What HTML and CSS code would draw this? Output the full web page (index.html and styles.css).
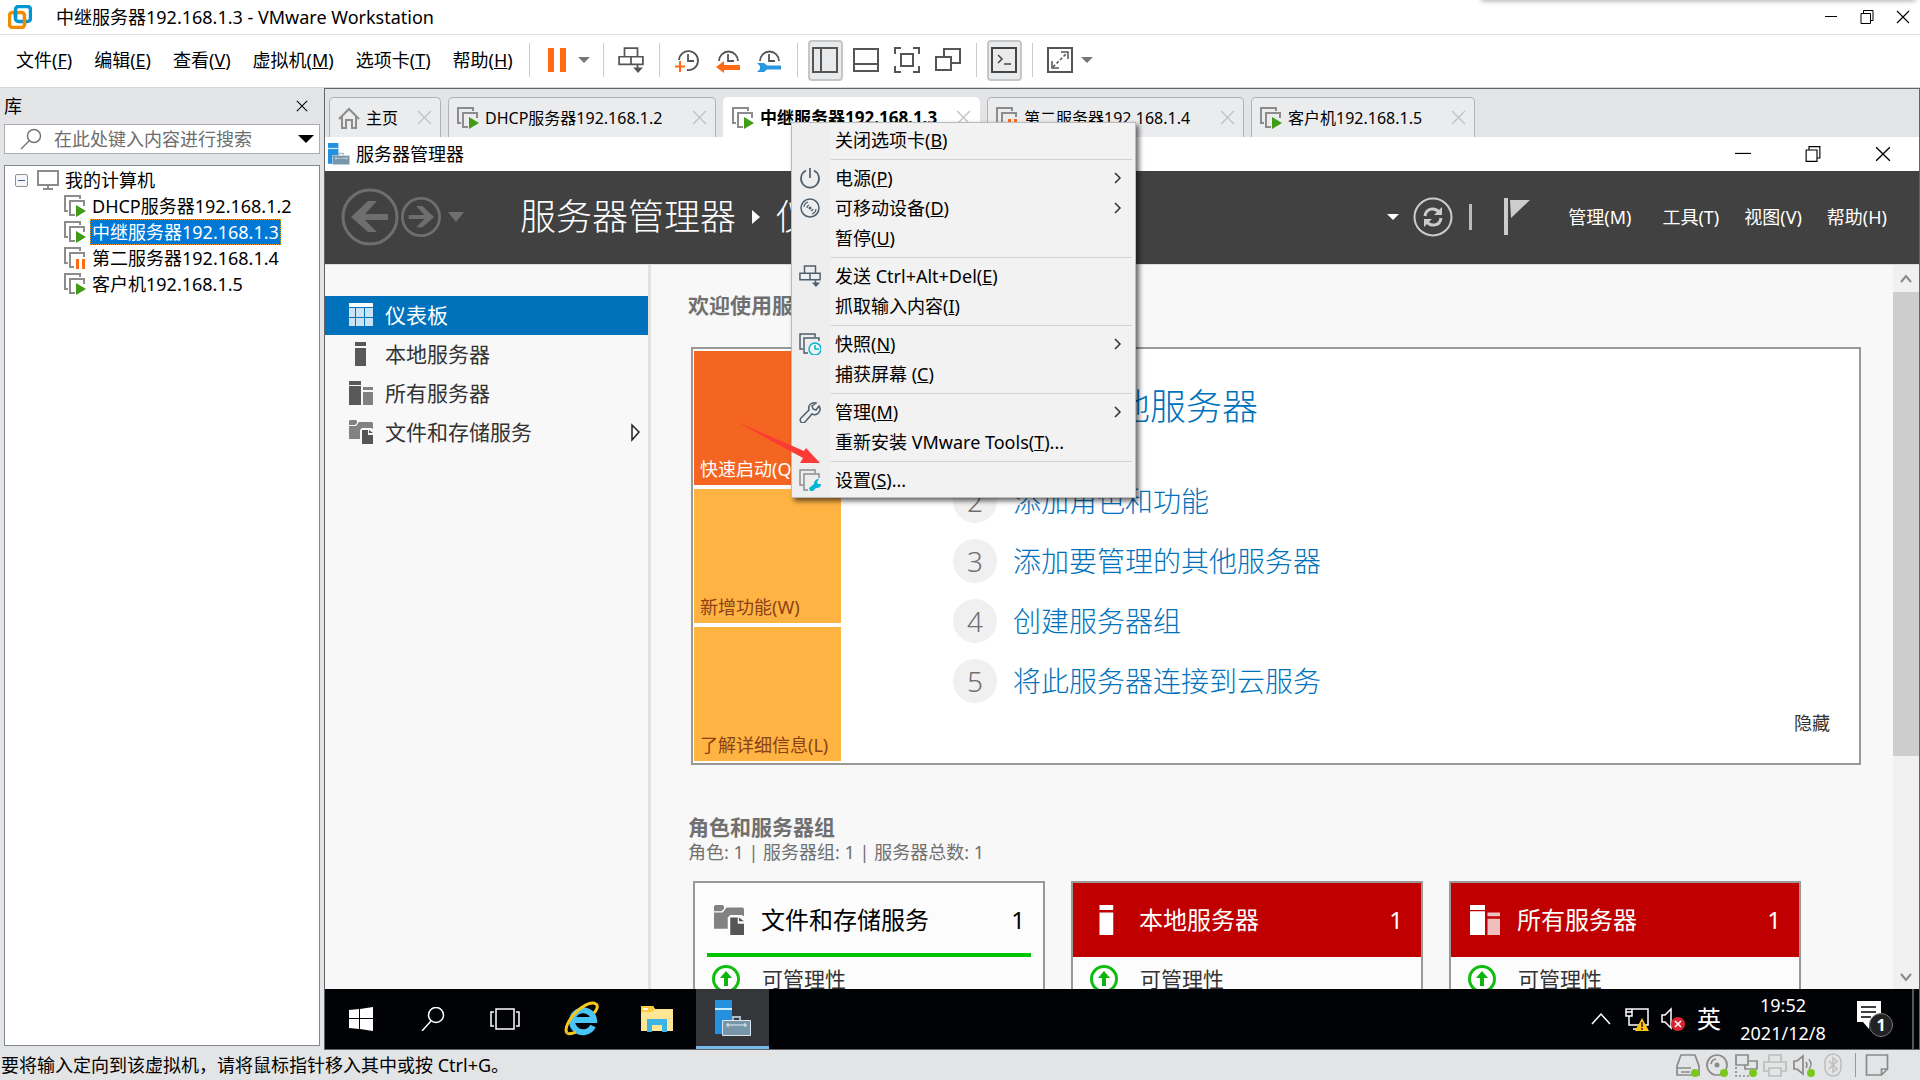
FILE: index.html
```html
<!DOCTYPE html>
<html lang="zh-CN">
<head>
    <meta charset="UTF-8">
    <meta name="viewport" content="width=device-width, initial-scale=1.0">
    <title>中继服务器192.168.1.3 - VMware Workstation</title>
    <link rel="stylesheet" href="styles.css">
</head>
<body>
    <!-- Shared icons -->
    <svg class="defs" aria-hidden="true">
        <symbol id="vm-on" viewBox="0 0 22 22">
            <path d="M1 17V1h15v3M1 16h3M6 20V6h14v5M5 20h6" fill="none" stroke="#8c8c8c" stroke-width="2"/>
            <path d="M12 10l10 6-10 6z" fill="#3f9c14"/>
        </symbol>
        <symbol id="vm-paused" viewBox="0 0 22 22">
            <path d="M1 17V1h15v3M1 16h3M6 20V6h14v4M5 20h5" fill="none" stroke="#8c8c8c" stroke-width="2"/>
            <path d="M12 12h3v10h-3zM18 12h3v10h-3z" fill="#ff6a13"/>
        </symbol>
        <symbol id="cross" viewBox="0 0 14 14">
            <path d="M1 1l12 12M13 1L1 13" fill="none" stroke="currentColor" stroke-width="1.2"/>
        </symbol>
        <symbol id="restore" viewBox="0 0 14 14">
            <path d="M1 3.500h9.500v10H1zM3.500 3.500v-3h9.500v10h-2.500" fill="none" stroke="currentColor"/>
        </symbol>
        <symbol id="send-keys" viewBox="0 0 24 24">
            <path d="M6 1h12v8H6zM1 9h22v7H1zM12 9v7M18 16v5" fill="none" stroke="currentColor" stroke-width="1.6"/>
            <path d="M14 19h9l-4.500 5z" fill="currentColor"/>
        </symbol>
        <symbol id="chevron" viewBox="0 0 8 12">
            <path d="M1 1l5 5-5 5" fill="none" stroke="currentColor" stroke-width="1.500"/>
        </symbol>
        <symbol id="one-server" viewBox="0 0 24 24">
            <path d="M6 0h11v4H6zM6 6h11v18H6z" fill="currentColor"/>
        </symbol>
        <symbol id="all-servers" viewBox="0 0 24 24">
            <path d="M0 0h12v4H0zM0 5h12v19H0z" fill="currentColor"/>
            <path d="M14 6h10v3H14zM14 11h10v13H14z" fill="currentColor" opacity=".75"/>
        </symbol>
        <symbol id="storage" viewBox="0 0 24 24">
            <path d="M0 1l1-1h6l1 1v2l-2 2H0zM0 6h7l3-4h13l1 1v6l-2-1h-9l-2 2v9H0z" fill="#828282"/>
            <path d="M13 10h6v5h5v9H13zM20 10l4 3h-4z" fill="#555"/>
        </symbol>
        <symbol id="server-manager" viewBox="0 0 36 36">
            <path d="M0 0h17v34H0z" fill="#2490df"/>
            <path d="M0 8h17v2H0z" fill="#cfe8fa"/>
            <path d="M18 20v-3h7v3" fill="none" stroke="#a9bdc9" stroke-width="2"/>
            <path d="M7.500 20.500h28v15h-28z" fill="#7896aa" stroke="#dce6ec"/>
            <path d="M11 25h21M13 23v4M30 23v4" stroke="#e6eef2"/>
        </symbol>
        <symbol id="arrow-up" viewBox="0 0 28 28">
            <circle cx="14" cy="14" r="12.500" fill="#fff" stroke="#12bd12" stroke-width="3"/>
            <path d="M14 6l6 7h-4v8h-4v-8H8z" fill="#0cb60c"/>
        </symbol>
    </svg>

    <header class="titlebar">
        <svg class="app-logo" viewBox="0 0 24 24">
            <rect x="7.500" y="1.500" width="15" height="15" rx="3" fill="none" stroke="#0095d3" stroke-width="3.500"/>
            <rect x="1.500" y="7.500" width="15" height="15" rx="3" fill="none" stroke="#f38b00" stroke-width="3.500"/>
            <path d="M7.500 6v6" stroke="#0095d3" stroke-width="3.500"/>
        </svg>
        <h1>中继服务器192.168.1.3 - VMware Workstation</h1>
        <div class="window-buttons">
            <button aria-label="最小化"><svg viewBox="0 0 14 14"><path d="M1 6.500h12" stroke="#000"/></svg></button>
            <button aria-label="还原"><svg><use href="#restore"/></svg></button>
            <button aria-label="关闭"><svg><use href="#cross"/></svg></button>
        </div>
    </header>
    <div class="top-shadow"></div>

    <nav class="menubar">
        <div class="menus">
            <button>文件(<u>F</u>)</button>
            <button>编辑(<u>E</u>)</button>
            <button>查看(<u>V</u>)</button>
            <button>虚拟机(<u>M</u>)</button>
            <button>选项卡(<u>T</u>)</button>
            <button>帮助(<u>H</u>)</button>
        </div>
        <div class="tools">
            <button aria-label="挂起"><svg viewBox="0 0 26 26"><path d="M4 1h6v24H4zM16 1h6v24h-6z" fill="#ff6a13"/></svg></button>
            <button class="drop" aria-label="电源选项"></button>
        </div>
        <div class="tools">
            <button aria-label="发送 Ctrl+Alt+Del"><svg viewBox="0 0 24 24"><use href="#send-keys"/></svg></button>
        </div>
        <div class="tools wide">
            <button aria-label="拍摄快照"><svg viewBox="0 0 26 26"><path d="M5 13a9.500 9.500 0 1 1 8 10M14 7v7h6" fill="none" stroke="#555" stroke-width="1.800"/><path d="M6 14v11M1 19.500h10" stroke="#ff6a13" stroke-width="2"/></svg></button>
            <button aria-label="恢复快照"><svg viewBox="0 0 26 26"><path d="M4 14a9.500 9.500 0 1 1 19 0M13 7v7h6" fill="none" stroke="#555" stroke-width="1.800"/><path d="M1 20l8-6v4h16v5H9v3z" fill="#ff6a13"/></svg></button>
            <button aria-label="管理快照"><svg viewBox="0 0 26 26"><path d="M4 14a9.500 9.500 0 1 1 19 0M13 7v7h6" fill="none" stroke="#555" stroke-width="1.800"/><path d="M1 16h7l3 2.500h14v4H11L8 25H1l3-3v-3z" fill="#2896e0"/></svg></button>
        </div>
        <div class="tools wide">
            <button class="on" aria-label="显示库"><svg viewBox="0 0 26 26"><path d="M1 1h24v24H1zM9 1v24" fill="none" stroke="#555" stroke-width="2"/></svg></button>
            <button aria-label="缩略图栏"><svg viewBox="0 0 26 26"><path d="M1 2h24v22H1zM1 17h24" fill="none" stroke="#555" stroke-width="2"/></svg></button>
            <button aria-label="全屏"><svg viewBox="0 0 26 26"><path d="M1 7V1h6M19 1h6v6M25 19v6h-6M7 25H1v-6M7 7h12v12H7z" fill="none" stroke="#555" stroke-width="2"/></svg></button>
            <button aria-label="Unity"><svg viewBox="0 0 26 26"><path d="M1 10h15v13H1zM9 10V2h16v14h-8" fill="none" stroke="#555" stroke-width="2"/></svg></button>
        </div>
        <div class="tools">
            <button class="on" aria-label="控制台"><svg viewBox="0 0 26 26"><path d="M1 1h24v24H1z" fill="none" stroke="#444" stroke-width="2"/><path d="M7 8l4 4-4 4M13 17h7" fill="none" stroke="#444" stroke-width="1.500"/></svg></button>
        </div>
        <div class="tools">
            <button aria-label="拉伸"><svg viewBox="0 0 26 26"><path d="M1 1h24v24H1z" fill="none" stroke="#555" stroke-width="2"/><path d="M5 14v7h7M14 5h7v7" fill="none" stroke="#555" stroke-width="1.500"/><path d="M6 20L20 6" stroke="#555" stroke-width="1.500" stroke-dasharray="3 2"/></svg></button>
            <button class="drop" aria-label="拉伸选项"></button>
        </div>
    </nav>

    <main class="workspace">
        <!-- Library -->
        <aside class="library">
            <div class="library-head">
                <h2>库</h2>
                <button aria-label="关闭库"><svg><use href="#cross"/></svg></button>
            </div>
            <label class="search">
                <svg viewBox="0 0 22 22"><circle cx="14" cy="8" r="6.500" fill="none" stroke="#777" stroke-width="1.500"/><path d="M9 13l-8 8" stroke="#777" stroke-width="1.500"/></svg>
                <input type="text" aria-label="搜索" placeholder="在此处键入内容进行搜索">
                <span class="search-caret"></span>
            </label>
            <div class="tree">
                <div class="tree-root">
                    <button class="expander" aria-label="折叠"></button>
                    <svg viewBox="0 0 22 22"><path d="M1 2h20v14H1zM11 16v4M6 20h10" fill="none" stroke="#8c8c8c" stroke-width="2"/></svg>
                    <span>我的计算机</span>
                </div>
                <ul>
                    <li><svg><use href="#vm-on"/></svg><a href="#">DHCP服务器192.168.1.2</a></li>
                    <li><svg><use href="#vm-on"/></svg><a href="#" class="selected">中继服务器192.168.1.3</a></li>
                    <li><svg><use href="#vm-paused"/></svg><a href="#">第二服务器192.168.1.4</a></li>
                    <li><svg><use href="#vm-on"/></svg><a href="#">客户机192.168.1.5</a></li>
                </ul>
            </div>
        </aside>

        <section class="console">
            <div class="tabs">
                <div class="tab home">
                    <svg viewBox="0 0 22 22"><path d="M1 12L11 2l10 10M4 10v11h4v-8h6v8h4V10" fill="none" stroke="#8c8c8c" stroke-width="2"/></svg>
                    <a href="#">主页</a>
                    <button aria-label="关闭"><svg><use href="#cross"/></svg></button>
                </div>
                <div class="tab longest">
                    <svg><use href="#vm-on"/></svg>
                    <a href="#">DHCP服务器192.168.1.2</a>
                    <button aria-label="关闭"><svg><use href="#cross"/></svg></button>
                </div>
                <div class="tab long active">
                    <svg><use href="#vm-on"/></svg>
                    <a href="#">中继服务器192.168.1.3</a>
                    <button aria-label="关闭"><svg><use href="#cross"/></svg></button>

                    <!-- Context menu of the tab -->
                    <div class="context-menu" role="menu">
                        <button role="menuitem"><i></i><span>关闭选项卡(<u>B</u>)</span></button>
                        <hr>
                        <button role="menuitem">
                            <i><svg viewBox="0 0 22 22"><path d="M7 3.500a9 9 0 1 0 8 0M11 1v10" fill="none" stroke="#4d5f6e" stroke-width="1.700"/></svg></i>
                            <span>电源(<u>P</u>)</span><svg class="more"><use href="#chevron"/></svg>
                        </button>
                        <button role="menuitem">
                            <i><svg viewBox="0 0 22 22"><circle cx="11" cy="11" r="9" fill="none" stroke="#4d5f6e" stroke-width="1.500"/><circle cx="11" cy="11" r="1.500" fill="#4d5f6e"/><path d="M5 10a6 6 0 0 1 4-5M8 11a3 3 0 0 1 2-3M17 12a6 6 0 0 1-4 5M14 12a3 3 0 0 1-2 2" fill="none" stroke="#4d5f6e" stroke-width="1.200"/></svg></i>
                            <span>可移动设备(<u>D</u>)</span><svg class="more"><use href="#chevron"/></svg>
                        </button>
                        <button role="menuitem"><i></i><span>暂停(<u>U</u>)</span></button>
                        <hr>
                        <button role="menuitem"><i><svg><use href="#send-keys"/></svg></i><span>发送 Ctrl+Alt+Del(<u>E</u>)</span></button>
                        <button role="menuitem"><i></i><span>抓取输入内容(<u>I</u>)</span></button>
                        <hr>
                        <button role="menuitem">
                            <i><svg viewBox="0 0 22 22"><path d="M4 16H1V1h15v3M9 20H5V5h15v3" fill="none" stroke="#4d5f6e" stroke-width="1.500"/><circle cx="16" cy="16" r="6" fill="#f2f2f2" stroke="#06b5d4" stroke-width="1.500"/><path d="M16 12v4h4" fill="none" stroke="#06b5d4" stroke-width="1.500"/></svg></i>
                            <span>快照(<u>N</u>)</span><svg class="more"><use href="#chevron"/></svg>
                        </button>
                        <button role="menuitem"><i></i><span>捕获屏幕 (<u>C</u>)</span></button>
                        <hr>
                        <button role="menuitem">
                            <i><svg viewBox="0 0 22 22"><path d="M17 2a5.500 5.500 0 0 0-7 7L2 17a2.500 2.500 0 0 0 4 4l7-8a5.500 5.500 0 0 0 7-8l-3 4-3-1-1-3z" fill="none" stroke="#4d5f6e" stroke-width="1.500"/></svg></i>
                            <span>管理(<u>M</u>)</span><svg class="more"><use href="#chevron"/></svg>
                        </button>
                        <button role="menuitem"><i></i><span>重新安装 VMware Tools(<u>T</u>)...</span></button>
                        <hr>
                        <button role="menuitem">
                            <i><svg viewBox="0 0 22 22"><path d="M4 16H1V1h15v3M9 21H5V5h15v4" fill="none" stroke="#8c8c8c" stroke-width="1.500"/><path d="M11 22l-1-3 5-4c0-3 2-5 5-5l-2 3 1 2h3c0 3-2 4-5 4l-3 3z" fill="#06b5d4"/></svg></i>
                            <span>设置(<u>S</u>)...</span>
                        </button>
                        <svg class="pointer" viewBox="0 0 84 44"><path d="M0 1l67 29 2-3 14 15H63l3-5z" fill="#fc3b36"/></svg>
                    </div>
                </div>
                <div class="tab long">
                    <svg><use href="#vm-paused"/></svg>
                    <a href="#">第二服务器192.168.1.4</a>
                    <button aria-label="关闭"><svg><use href="#cross"/></svg></button>
                </div>
                <div class="tab short">
                    <svg><use href="#vm-on"/></svg>
                    <a href="#">客户机192.168.1.5</a>
                    <button aria-label="关闭"><svg><use href="#cross"/></svg></button>
                </div>
            </div>

            <!-- Guest desktop -->
            <div class="guest">
                <div class="guest-title">
                    <svg class="guest-logo"><use href="#server-manager"/></svg>
                    <span>服务器管理器</span>
                    <div class="window-buttons big">
                        <button aria-label="最小化"><svg viewBox="0 0 14 14"><path d="M0 6.500h14" stroke="#000"/></svg></button>
                        <button aria-label="还原"><svg><use href="#restore"/></svg></button>
                        <button aria-label="关闭"><svg><use href="#cross"/></svg></button>
                    </div>
                </div>

                <div class="banner">
                    <button class="back" aria-label="后退"><svg viewBox="0 0 58 58"><circle cx="29" cy="29" r="27" fill="none" stroke="#6e6e6e" stroke-width="3"/><path d="M10 29l17-16h9L24 26h23v6H24l12 12h-9z" fill="#6e6e6e"/></svg></button>
                    <button class="forward" aria-label="前进"><svg viewBox="0 0 58 58"><circle cx="29" cy="29" r="27" fill="none" stroke="#6e6e6e" stroke-width="4"/><path d="M48 29L31 13h-9l12 13H11v6h23L22 44h9z" fill="#6e6e6e"/></svg></button>
                    <span class="history-caret"></span>
                    <h2>服务器管理器<span class="crumb"></span>仪表板</h2>
                    <div class="banner-tools">
                        <span class="banner-caret"></span>
                        <button class="refresh" aria-label="刷新"><svg viewBox="0 0 40 40"><circle cx="20" cy="20" r="18.500" fill="none" stroke="#ccc" stroke-width="2"/><path d="M12 19c1-8 10-9 14-4M28 21c-1 8-10 9-14 4" fill="none" stroke="#ccc" stroke-width="3"/><path d="M29 10v8h-8zM11 30v-8h8z" fill="#ccc"/></svg></button>
                        <span class="bar"></span>
                        <button class="flag" aria-label="通知"><svg viewBox="0 0 26 38"><path d="M0 0h4v37H0zM6 2h20L7 20z" fill="#ccc"/></svg></button>
                        <button class="manage">管理(M)</button>
                        <button>工具(T)</button>
                        <button>视图(V)</button>
                        <button>帮助(H)</button>
                    </div>
                </div>

                <div class="manager">
                    <nav class="side-nav">
                        <a href="#" class="current"><svg viewBox="0 0 24 24"><path d="M0 0h24v4H0z" fill="#fff"/><path d="M0 5h6v9H0zM7 5h8v9H7zM16 5h8v9h-8zM0 15h6v8H0zM7 15h8v8H7zM16 15h8v8h-8z" fill="#cbe3f5"/></svg>仪表板</a>
                        <a href="#"><svg><use href="#one-server"/></svg>本地服务器</a>
                        <a href="#"><svg><use href="#all-servers"/></svg>所有服务器</a>
                        <a href="#"><svg><use href="#storage"/></svg>文件和存储服务<svg class="expand" viewBox="0 0 10 20"><path d="M1 3l7 7-7 8z" fill="#fff" stroke="#222" stroke-width="1.500"/></svg></a>
                    </nav>

                    <div class="dashboard">
                        <h3>欢迎使用服务器管理器</h3>
                        <div class="welcome">
                            <div class="tiles">
                                <button class="tile quick">快速启动(Q)</button>
                                <button class="tile">新增功能(W)</button>
                                <button class="tile">了解详细信息(L)</button>
                            </div>
                            <ol class="steps">
                                <li class="first"><b>1</b><a href="#">配置此本地服务器</a></li>
                                <li><b>2</b><a href="#">添加角色和功能</a></li>
                                <li><b>3</b><a href="#">添加要管理的其他服务器</a></li>
                                <li><b>4</b><a href="#">创建服务器组</a></li>
                                <li><b>5</b><a href="#">将此服务器连接到云服务</a></li>
                            </ol>
                            <button class="hide">隐藏</button>
                        </div>

                        <h3>角色和服务器组</h3>
                        <p class="totals">角色: 1 | 服务器组: 1 | 服务器总数: 1</p>
                        <div class="cards">
                            <article class="card">
                                <header><svg><use href="#storage"/></svg><h4>文件和存储服务</h4><span>1</span></header>
                                <p><svg><use href="#arrow-up"/></svg>可管理性</p>
                            </article>
                            <article class="card alert">
                                <header><svg><use href="#one-server"/></svg><h4>本地服务器</h4><span>1</span></header>
                                <p><svg><use href="#arrow-up"/></svg>可管理性</p>
                            </article>
                            <article class="card alert">
                                <header><svg><use href="#all-servers"/></svg><h4>所有服务器</h4><span>1</span></header>
                                <p><svg><use href="#arrow-up"/></svg>可管理性</p>
                            </article>
                        </div>
                    </div>

                    <div class="scrollbar">
                        <svg viewBox="0 0 12 12"><path d="M1 9l5-6 5 6" fill="none" stroke="#888" stroke-width="2"/></svg>
                        <div class="track"><div class="thumb"></div></div>
                        <svg viewBox="0 0 12 12"><path d="M1 3l5 6 5-6" fill="none" stroke="#888" stroke-width="2"/></svg>
                    </div>
                </div>

                <div class="taskbar">
                    <button aria-label="开始"><svg viewBox="0 0 24 24"><path d="M0 3l10-1v9H0zM11 2l13-2v11H11zM0 12h10v10L0 21zM11 12h13v12l-13-2z" fill="#fff"/></svg></button>
                    <button aria-label="搜索"><svg viewBox="0 0 24 24"><circle cx="15" cy="8" r="7.500" fill="none" stroke="#fff" stroke-width="1.500"/><path d="M10 14L1 24" stroke="#fff" stroke-width="1.500"/></svg></button>
                    <button aria-label="任务视图"><svg class="task-view" viewBox="0 0 30 24"><path d="M6 2h18v20H6zM4 5H1v14h3M26 5h3v14h-3" fill="none" stroke="#fff" stroke-width="1.500"/></svg></button>
                    <button class="app" aria-label="Internet Explorer"><svg viewBox="0 0 36 36"><path d="M30 25a11 11 0 1 1 1-6H12" fill="none" stroke="#48c4f5" stroke-width="6"/><path d="M4 32C-2 24 22-3 33 3c3 2 0 7-2 9" fill="none" stroke="#f7c71c" stroke-width="3"/><path d="M4 32c2 2 6 0 9-1" fill="none" stroke="#f7c71c" stroke-width="3"/></svg></button>
                    <button class="app" aria-label="文件资源管理器"><svg viewBox="0 0 36 36"><path d="M2 5h12l2 3h18v22H2z" fill="#ffe694"/><path d="M2 5h12l2 3-3 3H2z" fill="#ffcb3d"/><path d="M4 7h5v2H4z" fill="#fff"/><path d="M8 18h20v13h-5v-7H13v7H8z" fill="#3db4e7"/></svg></button>
                    <button class="app running" aria-label="服务器管理器"><svg><use href="#server-manager"/></svg></button>
                    <div class="tray">
                        <button aria-label="显示隐藏的图标"><svg viewBox="0 0 24 24"><path d="M3 17l9-10 9 10" fill="none" stroke="#fff" stroke-width="1.500"/></svg></button>
                        <button aria-label="网络"><svg viewBox="0 0 24 24"><path d="M6 2h17v16H4V9M1 2h6v7H1zM1 5h6M8 22h6" fill="none" stroke="#fff" stroke-width="1.500"/><path d="M17 11l7 13H10z" fill="#ffc20e"/><path d="M17 15v5M17 21v2" stroke="#222" stroke-width="1.500"/></svg></button>
                        <button aria-label="音量"><svg viewBox="0 0 24 24"><path d="M1 8h3l6-6v19l-6-6H1z" fill="none" stroke="#fff" stroke-width="1.500"/><circle cx="17" cy="17" r="7" fill="#dc2430"/><path d="M14 14l6 6M20 14l-6 6" stroke="#fff" stroke-width="1.500"/></svg></button>
                        <button class="ime">英</button>
                        <time><span>19:52</span><span>2021/12/8</span></time>
                        <button class="notify" aria-label="通知"><svg viewBox="0 0 24 28"><path d="M0 0h24v21H14l-2 2v5l-6-7H0z" fill="#fff"/><path d="M4 6h15M4 11h15M4 16h10" stroke="#000" stroke-width="1.500"/></svg><em>1</em></button>
                    </div>
                </div>
            </div>
        </section>
    </main>

    <footer class="statusbar">
        <span>要将输入定向到该虚拟机，请将鼠标指针移入其中或按 Ctrl+G。</span>
        <div class="devices">
            <svg viewBox="0 0 24 24"><path d="M5 2h14l4 11v9H1v-9zM1 15h14M5 19h9" fill="none" stroke="#8a8a8a" stroke-width="1.700"/><circle cx="19" cy="20" r="4" fill="#7ac81e"/></svg>
            <svg viewBox="0 0 24 24"><circle cx="12" cy="12" r="10" fill="none" stroke="#8a8a8a" stroke-width="1.700"/><circle cx="12" cy="12" r="2.500" fill="#8a8a8a"/><path d="M6 11a6 6 0 0 1 5-5" fill="none" stroke="#8a8a8a" stroke-width="1.700"/><circle cx="19" cy="20" r="4" fill="#7ac81e"/></svg>
            <svg viewBox="0 0 24 24"><path d="M2 2h12v10H2zM11 12v4h12V8h-8" fill="none" stroke="#8a8a8a" stroke-width="1.700"/><path d="M2 14v9h15" fill="none" stroke="#8a8a8a" stroke-width="1.700" stroke-dasharray="2 2"/><circle cx="19" cy="20" r="4" fill="#7ac81e"/></svg>
            <svg viewBox="0 0 24 24"><path d="M6 9V2h12v7M5 18H1V9h22v9h-4M6 15h12v8H6z" fill="none" stroke="#bdbdbd" stroke-width="1.700"/></svg>
            <svg viewBox="0 0 24 24"><path d="M2 8h3l6-5v18l-6-5H2z" fill="none" stroke="#8a8a8a" stroke-width="1.700"/><path d="M14 9q2 3 0 6M17 6q4 6 0 10" fill="none" stroke="#8a8a8a" stroke-width="1.500"/><circle cx="19" cy="20" r="4" fill="#7ac81e"/></svg>
            <svg viewBox="0 0 24 24"><rect x="4" y="1" width="16" height="22" rx="8" fill="none" stroke="#bdbdbd" stroke-width="1.500"/><path d="M8 8l8 8-4 3V5l4 3-8 8" fill="none" stroke="#bdbdbd" stroke-width="1.500"/></svg>
            <svg class="note" viewBox="0 0 24 24"><path d="M2 2h21v14l-6 6H2zM23 16h-6v6" fill="none" stroke="#8a8a8a" stroke-width="1.700"/></svg>
        </div>
    </footer>
</body>
</html>
```
FILE: styles.css
```css
* {
    box-sizing: border-box;
}
body {
    margin: 0;
    height: 100vh;
    display: flex;
    flex-direction: column;
    overflow: hidden;
    background: #e3e4e6;
    color: #000;
    font-family: "Noto Sans", "Noto Sans CJK SC", sans-serif;
    font-size: 18px;
    line-height: 26px;
}
h1, h2, h3, h4, p, ul, ol {
    margin: 0;
    padding: 0;
    font-size: inherit;
    font-weight: normal;
    list-style: none;
}
button {
    margin: 0;
    padding: 0;
    border: 0;
    background: none;
    color: inherit;
    font: inherit;
    text-align: left;
    white-space: nowrap;
}
a {
    color: inherit;
    text-decoration: none;
    white-space: nowrap;
}
svg {
    display: block;
    flex: none;
    width: 22px;
    height: 22px;
}
.defs {
    position: absolute;
    width: 0;
    height: 0;
}

/* Title bar */
.titlebar {
    display: flex;
    align-items: center;
    height: 35px;
    padding: 0 10px 0 8px;
    background: #fff;
    border-bottom: 1px solid #e0e0e0;
}
.app-logo {
    width: 24px;
    height: 24px;
    margin-right: 24px;
}
.window-buttons {
    display: flex;
    gap: 22px;
    margin-left: auto;
}
.window-buttons svg {
    width: 14px;
    height: 14px;
}
.top-shadow {
    position: absolute;
    top: -10px;
    right: 6px;
    width: 432px;
    height: 10px;
    box-shadow: 0 0 5px 1px #aaa;
}

/* Menu bar and toolbar */
.menubar {
    display: flex;
    align-items: center;
    height: 53px;
    padding-bottom: 2px;
    background: #fff;
    border-bottom: 1px solid #d8d8d8;
}
.menus {
    display: flex;
    gap: 22px;
    padding: 0 16px;
}
.tools {
    display: flex;
    align-items: center;
    height: 34px;
    padding: 0 10px;
    border-left: 1px solid #ccc;
}
.tools.wide {
    gap: 6px;
}
.tools button {
    display: flex;
    align-items: center;
    justify-content: center;
    width: 35px;
    height: 41px;
    border-radius: 4px;
}
.tools svg {
    width: 26px;
    height: 26px;
    color: #555;
}
.tools .on {
    background: #e9eaec;
    border: 2px solid #c4c6c8;
}
.tools .drop {
    width: 18px;
}
.drop::after {
    content: "";
    border: 6px solid transparent;
    border-top-color: #777;
    border-bottom-width: 0;
}

.workspace {
    flex: 1;
    display: flex;
    min-height: 0;
}

/* Library */
.library {
    width: 324px;
    display: flex;
    flex-direction: column;
    padding: 0 4px 4px;
}
.library-head {
    display: flex;
    align-items: center;
    justify-content: space-between;
    height: 36px;
    padding-right: 12px;
}
.library-head svg {
    width: 12px;
    height: 12px;
}
.search {
    display: flex;
    align-items: center;
    height: 30px;
    padding: 0 5px 0 15px;
    background: #fff;
    border: 1px solid #abadb3;
}
.search input {
    flex: 1;
    min-width: 0;
    margin: 0 0 0 12px;
    padding: 0;
    border: 0;
    outline: 0;
    font: inherit;
}
.search input::placeholder {
    color: #6d6d6d;
}
.search-caret {
    border: 8px solid transparent;
    border-top-color: #000;
    border-bottom-width: 0;
}
.tree {
    flex: 1;
    margin-top: 11px;
    padding: 1px 0 0 10px;
    background: #fff;
    border: 1px solid #828790;
}
.tree-root, .tree li {
    display: flex;
    align-items: center;
    height: 26px;
}
.tree-root svg {
    margin: 0 6px 0 9px;
}
.tree li {
    padding-left: 49px;
}
.tree li a {
    margin-left: 4px;
    padding: 0 2px;
}
.tree .selected {
    background: #0078d7;
    color: #fff;
    outline: 1px dotted #f90;
    outline-offset: -1px;
}
.expander {
    width: 13px;
    height: 13px;
    border: 1px solid #919191;
    border-radius: 2px;
    background: linear-gradient(#3f5fa8, #3f5fa8) center / 7px 1px no-repeat #f6f6f6;
}

/* Tabs */
.console {
    flex: 1;
    display: flex;
    flex-direction: column;
    min-width: 0;
    border: 1px solid #636466;
}
.tabs {
    display: flex;
    gap: 7px;
    height: 48px;
    padding: 8px 4px 0;
    font-size: 16px;
}
.tab {
    position: relative;
    display: flex;
    align-items: center;
    padding: 0 8px;
    background: #ebecee;
    border: 1px solid #b0b2b5;
    border-bottom: 0;
    border-radius: 5px 5px 0 0;
}
.tab.home {
    width: 112px;
}
.tab.longest {
    width: 268px;
}
.tab.long {
    width: 257px;
}
.tab.short {
    width: 224px;
}
.tab > a {
    flex: 1;
    padding-left: 6px;
}
.tab > button {
    color: #c0c1c3;
}
.tab > button svg {
    width: 15px;
    height: 15px;
}
.tab.active {
    background: #fff;
    border-color: #fff;
}
.tab.active > a {
    font-size: 17px;
    font-weight: bold;
}

/* Context menu */
.context-menu {
    position: absolute;
    z-index: 10;
    top: 24px;
    left: 67px;
    width: 345px;
    padding: 2px 3px 2px 0;
    background: linear-gradient(90deg, #eee 39px, #f2f2f2 39px);
    border: 1px solid #bbb;
    box-shadow: 3px 3px 5px rgba(0, 0, 0, .6);
    font-size: 18px;
}
.context-menu button {
    display: flex;
    align-items: center;
    width: 100%;
    height: 30px;
}
.context-menu i {
    width: 43px;
    padding-left: 7px;
    color: #4d5f6e;
}
.context-menu span {
    flex: 1;
}
.context-menu .more {
    width: 8px;
    height: 12px;
    margin-right: 10px;
    color: #333;
}
.context-menu hr {
    height: 1px;
    margin: 4px 0 3px 39px;
    border: 0;
    background: #d0d0d0;
}
.pointer {
    position: absolute;
    left: -55px;
    top: 298px;
    width: 84px;
    height: 44px;
}

/* Guest window */
.guest {
    flex: 1;
    display: flex;
    flex-direction: column;
    min-height: 0;
    background: #f8f8f8;
}
.guest-title {
    display: flex;
    align-items: center;
    gap: 6px;
    height: 34px;
    padding: 0 28px 0 3px;
    background: #fff;
}
.window-buttons.big {
    gap: 54px;
}
.big svg {
    width: 16px;
    height: 16px;
}
.banner {
    display: flex;
    align-items: center;
    height: 94px;
    padding: 0 32px 2px 16px;
    background: #414141;
    border-bottom: 1px solid #ddd;
    color: #fff;
}
.back svg {
    width: 58px;
    height: 58px;
}
.forward svg {
    width: 40px;
    height: 40px;
    margin: 0 7px 0 2px;
}
.history-caret {
    border: 8px solid transparent;
    border-top: 10px solid #6e6e6e;
    border-bottom-width: 0;
}
.banner h2 {
    display: flex;
    align-items: center;
    margin-left: 56px;
    font-size: 36px;
    font-weight: 300;
    line-height: 50px;
}
.crumb {
    margin: 0 16px;
    border: 7px solid transparent;
    border-left: 8px solid #fff;
    border-right-width: 0;
}
.banner-tools {
    display: flex;
    align-items: center;
    gap: 25px;
    margin-left: auto;
}
.banner-caret {
    margin-right: -11px;
    border: 6px solid transparent;
    border-top-color: #fff;
    border-bottom-width: 0;
}
.refresh {
    margin-right: -9px;
}
.refresh svg {
    width: 40px;
    height: 40px;
}
.bar {
    width: 3px;
    height: 26px;
    margin-right: 7px;
    background: #bbb;
}
.flag {
    margin-right: 13px;
}
.manage {
    margin-right: 6px;
}
.flag svg {
    width: 26px;
    height: 38px;
}

.manager {
    flex: 1;
    display: flex;
    min-height: 0;
    overflow: hidden;
}
.side-nav {
    width: 326px;
    padding-top: 31px;
    border-right: 3px solid #e2e2e2;
    font-size: 21px;
    color: #333;
}
.side-nav a {
    display: flex;
    align-items: center;
    height: 39px;
    padding: 0 7px 2px 24px;
}
.side-nav svg {
    width: 24px;
    height: 24px;
    margin-right: 12px;
    color: #595959;
}
.side-nav .expand {
    width: 10px;
    height: 20px;
    margin: 0 0 0 auto;
}
.side-nav .current {
    background: #0072bc;
    color: #fff;
}

/* Dashboard */
.dashboard {
    flex: 1;
    min-width: 0;
    padding: 25px 32px 0 37px;
}
.dashboard h3 {
    font-size: 21px;
    font-weight: bold;
    line-height: 30px;
    color: #707070;
}
.welcome {
    position: relative;
    display: flex;
    height: 418px;
    margin: 27px 0 47px 3px;
    padding: 2px 1px;
    background: #fff;
    border: 2px solid #999;
}
.tiles {
    display: flex;
    flex-direction: column;
    gap: 4px;
    width: 147px;
    margin-right: 69px;
}
.tile {
    flex: 1;
    display: flex;
    align-items: flex-end;
    padding: 0 6px 3px;
    background: #ffb343;
    color: #8a4218;
}
.tile.quick {
    background: #f56522;
    color: #fff;
}
.steps {
    padding-top: 26px;
}
.steps li {
    display: flex;
    align-items: center;
    gap: 16px;
    height: 60px;
    padding-left: 43px;
    color: #0072bc;
    font-size: 28px;
    font-weight: 300;
    line-height: 44px;
}
.steps .first {
    margin-bottom: 34px;
    padding-left: 0;
    font-size: 36px;
}
.steps b {
    width: 44px;
    height: 44px;
    border-radius: 50%;
    background: #f0f0f0;
    color: #707070;
    font-size: 28px;
    font-weight: 300;
    text-align: center;
}
.hide {
    align-self: flex-end;
    margin: 0 28px 25px auto;
    color: #333;
}
.totals {
    line-height: 20px;
    color: #707070;
}
.cards {
    display: flex;
    gap: 26px;
    margin: 19px 0 0 5px;
}
.card {
    flex: 0 0 352px;
    height: 240px;
    background: #fcfcfc;
    border: 2px solid #999;
}
.card header {
    display: flex;
    align-items: center;
    height: 74px;
    margin: 0 12px;
    padding: 4px 6px 0 7px;
    border-bottom: 4px solid #00c400;
    font-size: 24px;
}
.card header svg {
    width: 30px;
    height: 30px;
    margin-right: 17px;
}
.card h4 {
    flex: 1;
}
.card.alert header {
    margin: 0;
    padding: 4px 18px 4px 19px;
    border: 0;
    background: #c00000;
    color: #fff;
}
.card p {
    display: flex;
    align-items: center;
    gap: 22px;
    padding: 6px 17px;
    font-size: 21px;
    line-height: 32px;
    color: #333;
}
.card p svg {
    width: 28px;
    height: 28px;
}
.scrollbar {
    width: 26px;
    display: flex;
    flex-direction: column;
    align-items: center;
    padding: 8px 0 6px;
    background: #f0f0f0;
}
.scrollbar svg {
    width: 12px;
    height: 12px;
}
.track {
    flex: 1;
    width: 100%;
    padding: 7px 0;
}
.thumb {
    height: 69%;
    background: #cdcdcd;
}

/* Guest taskbar */
.taskbar {
    display: flex;
    height: 60px;
    background: #000206;
    color: #fff;
}
.taskbar button {
    display: flex;
    align-items: center;
    justify-content: center;
    width: 72px;
}
.taskbar svg {
    width: 24px;
    height: 24px;
}
.taskbar .task-view {
    width: 30px;
}
.taskbar .app {
    width: 73px;
    margin-left: 3px;
}
.taskbar .app svg {
    width: 36px;
    height: 36px;
}
.taskbar .running {
    background: #35363a;
    border-bottom: 3px solid #76b9ed;
}
.tray {
    display: flex;
    align-items: center;
    gap: 12px;
    margin-left: auto;
    margin-right: 5px;
    padding-right: 19px;
    border-right: 2px solid #555;
}
.tray button {
    width: 24px;
}
.tray .ime {
    font-size: 24px;
}
.tray time {
    width: 100px;
    line-height: 28px;
    text-align: center;
}
.tray time span {
    display: block;
}
.tray .notify {
    position: relative;
    width: 36px;
    height: 36px;
    margin-left: 12px;
    justify-content: flex-start;
    align-items: flex-start;
}
.notify svg {
    height: 28px;
}
.notify em {
    position: absolute;
    right: 0;
    bottom: 0;
    width: 24px;
    height: 24px;
    border: 1px solid #777;
    border-radius: 50%;
    background: #222;
    font-size: 16px;
    font-style: normal;
    font-weight: bold;
    line-height: 22px;
    text-align: center;
}

/* Status bar */
.statusbar {
    display: flex;
    align-items: center;
    justify-content: space-between;
    height: 30px;
    padding: 0 31px 0 1px;
}
.devices {
    display: flex;
    gap: 5px;
}
.devices svg {
    width: 24px;
    height: 24px;
}
.devices .note {
    width: 34px;
    margin-left: 5px;
    padding-left: 8px;
    border-left: 1px solid #999;
}
```
